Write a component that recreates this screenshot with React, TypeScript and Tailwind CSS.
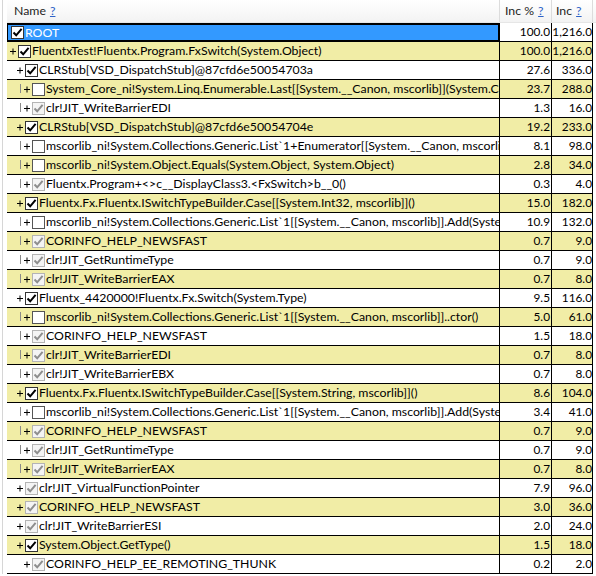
import React from "react";

type CB = "k" | "g" | "u";
type Row = { d: number; bar?: boolean; cb: CB; t: string; p: string; n: string };

const rows: Row[] = [
  { d: 0, cb: "k", t: "ROOT", p: "100.0", n: "1,216.0" },
  { d: 1, cb: "k", t: "FluentxTest!Fluentx.Program.FxSwitch(System.Object)", p: "100.0", n: "1,216.0" },
  { d: 2, cb: "k", t: "CLRStub[VSD_DispatchStub]@87cfd6e50054703a", p: "27.6", n: "336.0" },
  { d: 3, bar: true, cb: "u", t: "System_Core_ni!System.Linq.Enumerable.Last[[System.__Canon, mscorlib]](System.Collections.Generic.IEnumerable)", p: "23.7", n: "288.0" },
  { d: 3, bar: true, cb: "g", t: "clr!JIT_WriteBarrierEDI", p: "1.3", n: "16.0" },
  { d: 2, cb: "k", t: "CLRStub[VSD_DispatchStub]@87cfd6e50054704e", p: "19.2", n: "233.0" },
  { d: 3, bar: true, cb: "u", t: "mscorlib_ni!System.Collections.Generic.List`1+Enumerator[[System.__Canon, mscorlib]].MoveNext()", p: "8.1", n: "98.0" },
  { d: 3, bar: true, cb: "u", t: "mscorlib_ni!System.Object.Equals(System.Object, System.Object)", p: "2.8", n: "34.0" },
  { d: 3, bar: true, cb: "g", t: "Fluentx.Program+<>c__DisplayClass3.<FxSwitch>b__0()", p: "0.3", n: "4.0" },
  { d: 2, cb: "k", t: "Fluentx.Fx.Fluentx.ISwitchTypeBuilder.Case[[System.Int32, mscorlib]]()", p: "15.0", n: "182.0" },
  { d: 3, bar: true, cb: "u", t: "mscorlib_ni!System.Collections.Generic.List`1[[System.__Canon, mscorlib]].Add(System.__Canon)", p: "10.9", n: "132.0" },
  { d: 3, bar: true, cb: "g", t: "CORINFO_HELP_NEWSFAST", p: "0.7", n: "9.0" },
  { d: 3, bar: true, cb: "g", t: "clr!JIT_GetRuntimeType", p: "0.7", n: "9.0" },
  { d: 3, bar: true, cb: "g", t: "clr!JIT_WriteBarrierEAX", p: "0.7", n: "8.0" },
  { d: 2, cb: "k", t: "Fluentx_4420000!Fluentx.Fx.Switch(System.Type)", p: "9.5", n: "116.0" },
  { d: 3, bar: true, cb: "u", t: "mscorlib_ni!System.Collections.Generic.List`1[[System.__Canon, mscorlib]]..ctor()", p: "5.0", n: "61.0" },
  { d: 3, bar: true, cb: "g", t: "CORINFO_HELP_NEWSFAST", p: "1.5", n: "18.0" },
  { d: 3, bar: true, cb: "g", t: "clr!JIT_WriteBarrierEDI", p: "0.7", n: "8.0" },
  { d: 3, bar: true, cb: "g", t: "clr!JIT_WriteBarrierEBX", p: "0.7", n: "8.0" },
  { d: 2, cb: "k", t: "Fluentx.Fx.Fluentx.ISwitchTypeBuilder.Case[[System.String, mscorlib]]()", p: "8.6", n: "104.0" },
  { d: 3, bar: true, cb: "u", t: "mscorlib_ni!System.Collections.Generic.List`1[[System.__Canon, mscorlib]].Add(System.__Canon)", p: "3.4", n: "41.0" },
  { d: 3, bar: true, cb: "g", t: "CORINFO_HELP_NEWSFAST", p: "0.7", n: "9.0" },
  { d: 3, bar: true, cb: "g", t: "clr!JIT_GetRuntimeType", p: "0.7", n: "9.0" },
  { d: 3, bar: true, cb: "g", t: "clr!JIT_WriteBarrierEAX", p: "0.7", n: "8.0" },
  { d: 2, cb: "g", t: "clr!JIT_VirtualFunctionPointer", p: "7.9", n: "96.0" },
  { d: 2, cb: "g", t: "CORINFO_HELP_NEWSFAST", p: "3.0", n: "36.0" },
  { d: 2, cb: "g", t: "clr!JIT_WriteBarrierESI", p: "2.0", n: "24.0" },
  { d: 2, cb: "k", t: "System.Object.GetType()", p: "1.5", n: "18.0" },
  { d: 3, cb: "g", t: "CORINFO_HELP_EE_REMOTING_THUNK", p: "0.2", n: "2.0" },
];

function Check({ kind }: { kind: CB }) {
  const box =
    kind === "k"
      ? "border-[#333333] bg-white"
      : kind === "g"
      ? "border-[#b4b4b4] bg-[#f4f4f4]"
      : "border-[#555555] bg-white";
  const stroke = kind === "k" ? "#000000" : "#8e8e8e";
  return (
    <span className={`flex h-[13px] w-[13px] shrink-0 items-center justify-center border ${box}`}>
      {kind !== "u" && (
        <svg width="11" height="11" viewBox="0 0 11 11">
          <path d="M1.5 5.5 L4.2 8.3 L9.6 1.8" fill="none" stroke={stroke} strokeWidth="2" />
        </svg>
      )}
    </span>
  );
}

function Plus() {
  return (
    <svg width="7" height="7" viewBox="0 0 7 7" className="shrink-0">
      <path d="M0 3.5 H6 M3 0.5 V6.5" stroke="#000" strokeWidth="1" />
    </svg>
  );
}

function Q() {
  return <span className="ml-[4px] text-[#2d62c7] underline">?</span>;
}

export default function App() {
  return (
    <div
      className="relative h-[576px] w-[596px] overflow-hidden bg-white text-[12.3px] text-black"
      style={{ fontFamily: "Lato, 'Noto Sans', sans-serif" }}
    >
      <div className="flex">
        {/* left gutter */}
        <div className="flex w-[7px] shrink-0">
          <div className="w-[2px] bg-white" />
          <div className="w-[1px] bg-[#d6d6d6]" />
        </div>
        <div className="flex min-w-0 flex-1 flex-col">
          {/* header */}
          <div className="grid h-[23px] grid-cols-[493px_52px_41px_1fr] border-b border-[#e6e6e6] bg-gradient-to-b from-white to-[#f3f3f3] text-[#1e1e1e]">
            <div className="flex items-center border-r border-[#dcdcdc] pl-[7px]">
              Name<Q />
            </div>
            <div className="flex items-center border-r border-[#dcdcdc] pl-[5px]">
              Inc %<Q />
            </div>
            <div className="flex items-center border-r border-[#dcdcdc] pl-[4px]">
              Inc<Q />
            </div>
            <div />
          </div>
          {rows.map((r, i) => {
            const yellow = i % 2 === 1;
            const sel = i === 0;
            const bg = yellow ? "bg-[#f1eda6]" : "bg-white";
            return (
              <div key={i} className="grid h-[19px] grid-cols-[493px_52px_41px_1fr]">
                <div
                  className={`relative flex min-w-0 items-center overflow-hidden whitespace-nowrap border-b border-r border-black ${
                    sel ? "bg-[#3399ff] text-white shadow-[inset_0_0_0_1px_#000] border-t" : bg
                  }`}
                  style={{ paddingLeft: r.d === 0 ? 4 : 7 * r.d - 4 }}
                >
                  {r.bar && (
                    <span
                      className="absolute top-[4px] h-[9px] w-[1px] bg-[#8a8a8a]"
                      style={{ left: 7 * r.d - 8 }}
                    />
                  )}
                  {r.d > 0 && (
                    <span className="flex w-[8px] shrink-0 items-center">
                      <Plus />
                    </span>
                  )}
                  <Check kind={r.cb} />
                  <span className="ml-[1px] leading-[18px]">{r.t}</span>
                </div>
                <div className={`flex items-center justify-end whitespace-nowrap border-b border-r border-black pr-[1px] text-[11.8px] ${sel ? "bg-white" : bg}`}>
                  {r.p}
                </div>
                <div className={`flex items-center justify-end whitespace-nowrap border-b border-r border-black pr-0 text-[11.8px] ${sel ? "bg-white" : bg}`}>
                  {r.n}
                </div>
                <div className="bg-white" />
              </div>
            );
          })}
        </div>
      </div>
    </div>
  );
}
